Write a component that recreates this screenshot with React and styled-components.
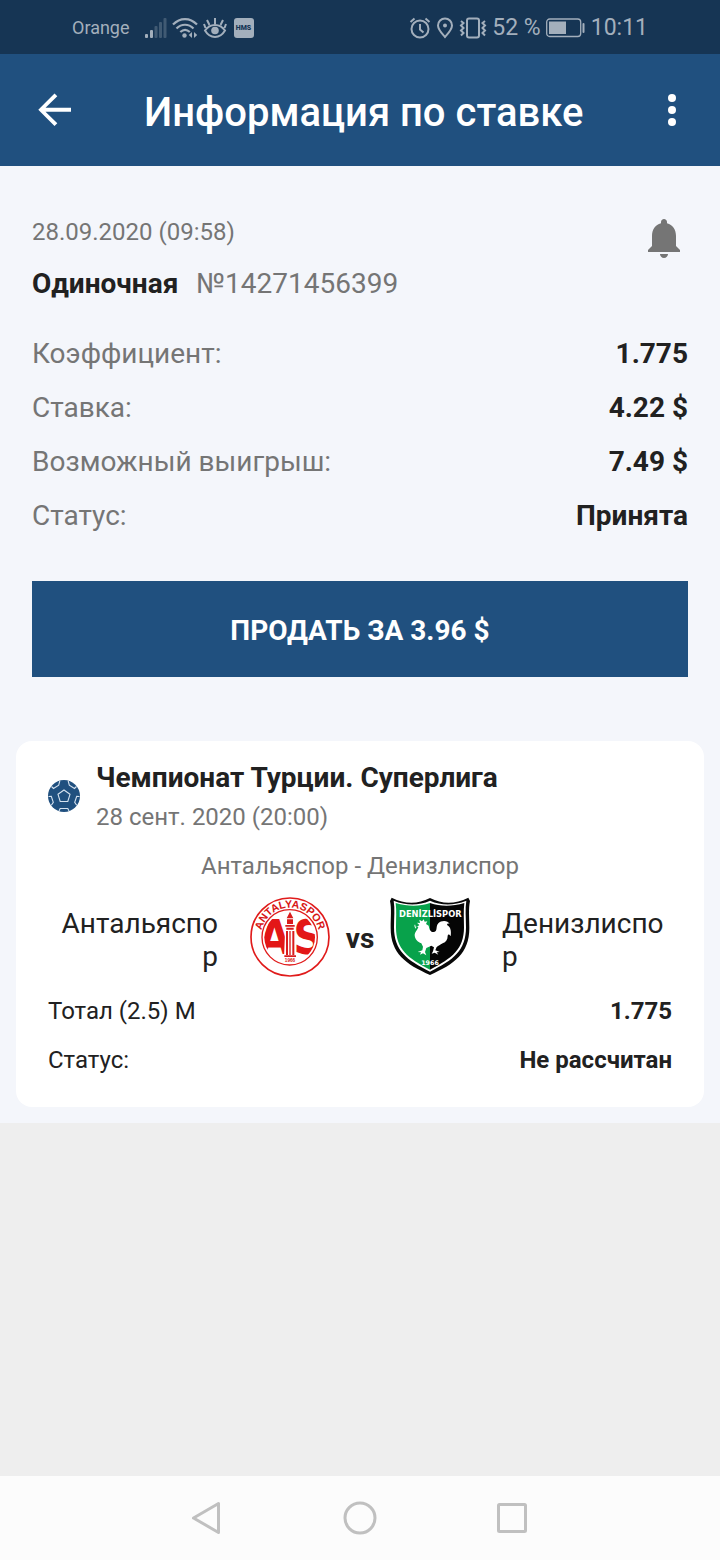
import React from 'react'
import styled, { createGlobalStyle } from 'styled-components'

const betRows = [
  { label: 'Коэффициент:', value: '1.775' },
  { label: 'Ставка:', value: '4.22 $' },
  { label: 'Возможный выигрыш:', value: '7.49 $' },
  { label: 'Статус:', value: 'Принята' },
]

const eventRows = [
  { label: 'Тотал (2.5) М', value: '1.775' },
  { label: 'Статус:', value: 'Не рассчитан' },
]

const SignalIcon = () => (
  <svg width='22' height='22' viewBox='0 0 22 22' fill='currentColor'>
    <rect x='0' y='17' width='3' height='4' rx='1' />
    <rect x='5' y='13' width='3' height='8' rx='1' />
    <g opacity='0.3'>
      <rect x='9.500' y='9' width='3' height='12' rx='1' />
      <rect x='14' y='5' width='3' height='16' rx='1' />
      <rect x='18.500' y='1' width='3' height='20' rx='1' />
    </g>
  </svg>
)

const WifiIcon = () => (
  <svg width='26' height='22' viewBox='0 0 26 22' fill='none' stroke='currentColor' strokeWidth='2.2'>
    <path d='M1 7.500C8 .2 18 .2 25 7.500M4.500 11.500c5-5 12-5 17 0M8.300 15c3-2.800 6.500-2.800 9.500 0' />
    <circle cx='12.500' cy='18.500' r='2.200' fill='currentColor' stroke='none' />
    <path d='M20 15v6l-3.200-3zM22 15v6l3.200-3z' fill='currentColor' stroke='none' />
  </svg>
)

const EyeIcon = () => (
  <svg width='24' height='22' viewBox='0 0 24 22' fill='none' stroke='currentColor' strokeWidth='2'>
    <path d='M2 13.500c5-7.500 15-7.500 20 0-5 8.500-15 8.500-20 0zM12 7V1M6.500 8 4 3M17.500 8 20 3M2.500 11 1 7M21.500 11l1.500-4' />
    <circle cx='12' cy='13.500' r='3.800' fill='currentColor' stroke='none' />
  </svg>
)

const AlarmIcon = () => (
  <svg width='22' height='22' viewBox='0 0 22 22' fill='none' stroke='currentColor' strokeWidth='2'>
    <circle cx='11' cy='12' r='8.500' />
    <path d='M11 7v5.500l3.500 3M1.500 5l4-3.500M20.500 5l-4-3.500' />
  </svg>
)

const PinIcon = () => (
  <svg width='18' height='22' viewBox='0 0 18 22' fill='none' stroke='currentColor' strokeWidth='2'>
    <path d='M9 20C5 15.500 2 12.500 2 8.500a7 7 0 0 1 14 0c0 4-3 7-7 11.500z' />
    <circle cx='9' cy='8.500' r='2' fill='currentColor' stroke='none' />
  </svg>
)

const VibrateIcon = () => (
  <svg width='28' height='22' viewBox='0 0 28 22' fill='none' stroke='currentColor' strokeWidth='2'>
    <rect x='8' y='1.500' width='12' height='19' rx='2' />
    <path d='M2 4l2.500 2L2 8.500 4.500 11 2 13.500 4.500 16 2 18.500M26 4l-2.500 2 2.500 2.500-2.500 2.500 2.500 2.500-2.500 2.500 2.500 2.500' />
  </svg>
)

const BatteryIcon = () => (
  <svg width='40' height='20' viewBox='0 0 40 20' fill='none'>
    <rect x='.7' y='1' width='34' height='17.500' rx='3' stroke='currentColor' strokeWidth='1.300' />
    <rect x='3' y='3.500' width='17' height='12.500' fill='currentColor' />
    <rect x='36.500' y='5' width='2' height='10' rx='1' fill='currentColor' />
  </svg>
)

const BackIcon = () => (
  <svg width='48' height='48' viewBox='0 0 48 48' fill='#fff'>
    <path d='M39 21.800H13.500L25.300 10.300 22.500 7.500 6.300 23.800 22.500 40l2.800-2.800L13.500 25.800H39z' />
  </svg>
)

const MoreIcon = () => (
  <svg width='48' height='48' viewBox='0 0 48 48' fill='#fff'>
    <circle cx='24' cy='12' r='4' />
    <circle cx='24' cy='24' r='4' />
    <circle cx='24' cy='36' r='4' />
  </svg>
)

const BellIcon = () => (
  <svg width='48' height='48' viewBox='0 0 24 24' fill='#757575'>
    <path d='M12 22c1.100 0 2-.9 2-2h-4c0 1.100.89 2 2 2zm6-6v-5c0-3.070-1.640-5.640-4.500-6.320V4c0-.83-.67-1.500-1.500-1.500s-1.500.67-1.500 1.500v.68C7.630 5.360 6 7.920 6 11v5l-2 2v1h16v-1l-2-2z' />
  </svg>
)

const BallIcon = () => (
  <svg width='32' height='32' viewBox='0 0 32 32' fill='none' stroke='#d5e2ef' strokeWidth='1.100'>
    <circle cx='16' cy='16' r='16' fill='#20507f' stroke='none' />
    <path d='M16 10l6 4.300-2.200 7.200h-7.600L10 14.300z' />
    <path d='M3.500 6.500 5.500 8.500l5.200-3.300 1.200-4.600M28.500 6.500 26.500 8.500l-5.200-3.300-1.200-4.600M.5 16.500l2.800-.2 2 6-2 3M31.500 16.500l-2.800-.2-2 6 2 3M11 31l1.200-2.500h7.600L21 31' />
  </svg>
)

const AntalyasporLogo = () => (
  <svg width='80' height='80' viewBox='30 36 240 240' role='img' aria-label='Антальяспор'>
    <defs>
      <path id='antalyaArc' d='M62 156a88 88 0 0 1 176 0' />
      <clipPath id='antalyaInner'>
        <circle cx='149' cy='157' r='76' />
      </clipPath>
    </defs>
    <g fill='none' stroke='#e01b1b'>
      <circle cx='150' cy='156' r='117' strokeWidth='5' />
      <circle cx='149' cy='157' r='83' strokeWidth='4' />
    </g>
    <LogoText fill='#d81515' fontSize='32' textAnchor='middle'>
      <textPath href='#antalyaArc' startOffset='50%'>
        ANTALYASPOR
      </textPath>
    </LogoText>
    <g clipPath='url(#antalyaInner)'>
      <NarrowText fill='#e31717' fontSize='142' x='54' y='207'>
        A
      </NarrowText>
      <NarrowText fill='#e31717' fontSize='142' x='160' y='207'>
        S
      </NarrowText>
    </g>
    <path d='M132 218l3-76-3-22h5l1-20 11-22 11 22 1 20h5l-3 22 4 76z' fill='#fff' />
    <path d='M150 80l10 20h-20zM141 103h18v14h-18zM136 120h28v5h-28zM139 128h22v6h-22zM138 138h6v72h-6zM148 138h4v72h-4zM157 138h6v72h-6zM133 211h35v5h-35z' fill='#d91c1c' />
    <LogoText fill='#d81515' fontSize='14' textAnchor='middle' x='150' y='230'>
      1966
    </LogoText>
  </svg>
)

const DenizlisporLogo = () => (
  <svg width='80' height='80' viewBox='30 36 240 240' role='img' aria-label='Денизлиспор'>
    <path d='M35 38c40 20 78 20 115 1 37 19 75 19 115-1l5 10c-5 24-2 48-2 82 0 75-45 108-118 140C77 238 32 205 32 130c0-34 3-58-2-82z' fill='#080808' />
    <path d='M41 47c38 15 75 15 109 0 34 15 71 15 109 0-4 25-1 51-1 80 0 69-38 99-108 133C80 226 42 196 42 127c0-29 3-55-1-80z' fill='#fff' />
    <path d='M47 54c37 11 71 11 103 0v200C83 220 48 192 48 127c0-27 2-49-1-73z' fill='#08a24b' />
    <path d='M253 54c-37 11-71 11-103 0v200c67-34 102-62 102-127 0-27-2-49 1-73z' fill='#050505' />
    <WideText fill='#fff' fontSize='25' textAnchor='middle' x='151' y='97'>
      DENİZLİSPOR
    </WideText>
    <path
      d='M108 128l10-8-7-7 9 1-2-10 8 5 5-6 3 7 8-1-4 8 8 5c2 12 6 20 16 19 12-2 4-17 13-26 9-10 28-10 34 2-7-3-9 0-7 4 10 5 12 17 10 33-4-7-8-7-9-2 0 12-5 19-15 23-8 4-12 8-18 11l-4 10 13 5-9 1 5 7-11-6-9 3 4-7 3-12-8-5-15 7-4 12 4 10-10-6-9 4 3-7-10-1 14-5 2-11-5-10c-11-4-19-12-20-24 0-10 9-16 11-25l-4-2-5 7-3-9 2-4z'
      fill='#fff'
    />
    <WideText fill='#fff' fontSize='19' textAnchor='middle' x='150' y='241'>
      1966
    </WideText>
  </svg>
)

const App = () => {
  return (
    <Page>
      <GlobalStyle />
      <StatusBar>
        <StatusGroup>
          <Carrier>Orange</Carrier>
          <SignalIcon />
          <WifiIcon />
          <EyeIcon />
          <Hms>HMS</Hms>
        </StatusGroup>
        <StatusGroup>
          <AlarmIcon />
          <PinIcon />
          <VibrateIcon />
          <span>52 %</span>
          <BatteryIcon />
          <span>10:11</span>
        </StatusGroup>
      </StatusBar>
      <Header>
        <IconButton $wide aria-label='Назад'>
          <BackIcon />
        </IconButton>
        <h1>Информация по ставке</h1>
        <IconButton aria-label='Меню'>
          <MoreIcon />
        </IconButton>
      </Header>
      <Content>
        <BetInfo>
          <BetTop>
            <div>
              <BetDate>28.09.2020 (09:58)</BetDate>
              <BetType>
                <strong>Одиночная</strong>
                <span>№14271456399</span>
              </BetType>
            </div>
            <IconButton aria-label='Уведомления'>
              <BellIcon />
            </IconButton>
          </BetTop>
          <BetList>
            {betRows.map(({ label, value }) => (
              <BetRow key={label}>
                <dt>{label}</dt>
                <dd>{value}</dd>
              </BetRow>
            ))}
          </BetList>
          <SellButton>ПРОДАТЬ ЗА 3.96 $</SellButton>
        </BetInfo>
        <Card>
          <League>
            <BallIcon />
            <div>
              <h2>Чемпионат Турции. Суперлига</h2>
              <time dateTime='2020-09-28T20:00'>28 сент. 2020 (20:00)</time>
            </div>
          </League>
          <MatchName>Антальяспор - Денизлиспор</MatchName>
          <Teams>
            <Team $home>Антальяспор</Team>
            <AntalyasporLogo />
            <Versus>vs</Versus>
            <DenizlisporLogo />
            <Team>Денизлиспор</Team>
          </Teams>
          <EventList>
            {eventRows.map(({ label, value }) => (
              <EventRow key={label}>
                <dt>{label}</dt>
                <dd>{value}</dd>
              </EventRow>
            ))}
          </EventList>
        </Card>
      </Content>
      <NavBar>
        <NavButton aria-label='Назад'>
          <svg width='48' height='48' viewBox='0 0 48 48'>
            <path d='M34.500 9.500v29L9.500 24z' />
          </svg>
        </NavButton>
        <NavButton aria-label='Домой'>
          <svg width='48' height='48' viewBox='0 0 48 48'>
            <circle cx='24' cy='24' r='15' />
          </svg>
        </NavButton>
        <NavButton aria-label='Недавние'>
          <svg width='48' height='48' viewBox='0 0 48 48'>
            <rect x='10.500' y='10.500' width='27' height='27' rx='1' />
          </svg>
        </NavButton>
      </NavBar>
    </Page>
  )
}

const GlobalStyle = createGlobalStyle`
  *, *::before, *::after {
    box-sizing: border-box;
  }
  body {
    margin: 0;
    font-family: Roboto, 'Noto Sans', sans-serif;
    color: #212121;
    background: #eee;
  }
  h1, h2, p, dl, dd {
    margin: 0;
  }
  button {
    border: 0;
    padding: 0;
    font-family: inherit;
    cursor: pointer;
  }
  svg {
    display: block;
    flex-shrink: 0;
  }
`

const LogoText = styled.text`
  font-family: 'Liberation Sans', sans-serif;
  font-weight: 700;
`

const NarrowText = styled.text`
  font-family: 'Liberation Sans Narrow', 'DejaVu Sans Condensed', sans-serif;
  font-weight: 700;
`

const WideText = styled.text`
  font-family: 'DejaVu Sans', sans-serif;
  font-weight: 700;
`

const Page = styled.div`
  min-height: 100vh;
  display: flex;
  flex-direction: column;
`

const StatusBar = styled.div`
  display: flex;
  justify-content: space-between;
  align-items: center;
  height: 54px;
  padding: 2px 72px 0;
  background: #163554;
  color: #a3afbc;
`

const StatusGroup = styled.div`
  display: flex;
  align-items: center;
  gap: 5px;
  font-size: 23px;
  line-height: 28px;
`

const Carrier = styled.span`
  margin-right: 10px;
  font-size: 18px;
`

const Hms = styled.span`
  width: 20px;
  height: 20px;
  margin-left: 2px;
  border-radius: 3px;
  background: #a3afbc;
  color: #163554;
  font-size: 7px;
  font-weight: 900;
  line-height: 20px;
  text-align: center;
`

const Header = styled.header`
  display: flex;
  align-items: center;
  height: 112px;
  padding-right: 24px;
  background: #20507f;
  h1 {
    flex: 1;
    padding: 6px 0 0 32px;
    font-size: 40px;
    font-weight: 500;
    line-height: 48px;
    color: #fff;
  }
`

const IconButton = styled.button`
  display: flex;
  justify-content: center;
  width: ${({ $wide }) => ($wide ? '112px' : '48px')};
  height: 48px;
  background: none;
`

const Content = styled.main`
  padding: 48px 16px 16px;
  background: #f4f6fb;
`

const BetInfo = styled.section`
  padding: 0 16px;
`

const BetTop = styled.div`
  display: flex;
  justify-content: space-between;
`

const BetDate = styled.p`
  padding-top: 4px;
  font-size: 24px;
  line-height: 28px;
  color: #757575;
`

const BetType = styled.p`
  display: flex;
  gap: 18px;
  padding-top: 21px;
  font-size: 28px;
  line-height: 34px;
  span {
    color: #757575;
  }
`

const BetList = styled.dl`
  padding: 26px 0 38px;
`

const Row = styled.div`
  display: flex;
  justify-content: space-between;
  dd {
    font-weight: 700;
  }
`

const BetRow = styled(Row)`
  font-size: 28px;
  line-height: 54px;
  dt {
    color: #757575;
  }
`

const SellButton = styled.button`
  display: block;
  width: 100%;
  height: 96px;
  padding-top: 2px;
  background: #20507f;
  color: #fff;
  font-size: 28px;
  font-weight: 700;
`

const Card = styled.section`
  margin-top: 64px;
  padding: 20px 32px 22px;
  border-radius: 16px;
  background: #fff;
`

const League = styled.div`
  display: flex;
  align-items: center;
  gap: 16px;
  h2 {
    font-size: 28px;
    font-weight: 700;
    line-height: 34px;
  }
  time {
    display: block;
    padding-top: 8px;
    font-size: 24px;
    line-height: 28px;
    color: #757575;
  }
`

const MatchName = styled.p`
  padding: 20px 0 16px;
  font-size: 24px;
  line-height: 30px;
  text-align: center;
  color: #757575;
`

const Teams = styled.div`
  display: flex;
  align-items: center;
`

const Team = styled.p`
  flex: 1 1 0;
  min-width: 0;
  margin: ${({ $home }) => ($home ? '0 32px 0 0' : '0 0 0 32px')};
  padding-top: 6px;
  font-size: 28px;
  line-height: 33px;
  text-align: ${({ $home }) => ($home ? 'right' : 'left')};
  word-break: break-all;
`

const Versus = styled.span`
  width: 60px;
  padding-top: 2px;
  font-size: 28px;
  font-weight: 700;
  text-align: center;
`

const EventList = styled.dl`
  padding-top: 10px;
`

const EventRow = styled(Row)`
  font-size: 24px;
  line-height: 49px;
`

const NavBar = styled.nav`
  display: flex;
  justify-content: center;
  align-items: center;
  gap: 104px;
  height: 84px;
  margin-top: auto;
  background: #fcfcfc;
`

const NavButton = styled.button`
  background: none;
  svg {
    fill: none;
    stroke: #c0c0c0;
    stroke-width: 3px;
    stroke-linejoin: round;
  }
`

export default App
